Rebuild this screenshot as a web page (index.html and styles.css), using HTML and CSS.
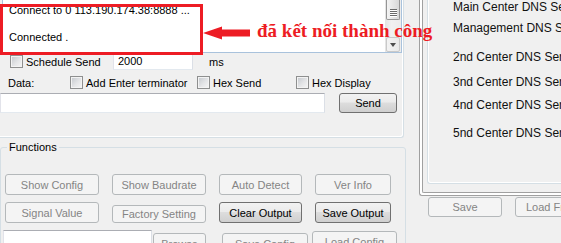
FILE: index.html
```html
<!DOCTYPE html>
<html lang="vi">
<head>
<meta charset="utf-8">
<title>Connection</title>
<link rel="stylesheet" href="styles.css">
</head>
<body>
<div class="app">
  <div class="left">
    <div class="upper">
      <div class="output">
        <div class="output-text">
          <div>Connect to 0 113.190.174.38:8888 ...</div>
          <div>&nbsp;</div>
          <div>Connected .</div>
        </div>
        <div class="scrollbar">
          <div class="thumb"><span class="grip"></span><span class="grip"></span><span class="grip"></span><span class="grip"></span></div>
          <div class="sb-down"><span class="tri"></span></div>
        </div>
      </div>
      <div class="row schedule">
        <span class="cb"></span><span class="lbl lbl-sched">Schedule Send</span>
        <span class="textbox tb-interval">2000</span>
        <span class="lbl ms">ms</span>
      </div>
      <div class="row data">
        <span class="lbl lbl-data">Data:</span>
        <span class="cb"></span><span class="lbl lbl-enter">Add Enter terminator</span>
        <span class="cb"></span><span class="lbl lbl-hexsend">Hex Send</span>
        <span class="cb"></span><span class="lbl lbl-hexdisp">Hex Display</span>
      </div>
      <div class="row send-row">
        <span class="textbox tb-data"></span>
        <button class="btn btn-send">Send</button>
      </div>
    </div>
    <fieldset class="functions">
      <legend>Functions</legend>
      <div class="grid">
        <button class="btn off">Show Config</button>
        <button class="btn off">Show Baudrate</button>
        <button class="btn off">Auto Detect</button>
        <button class="btn off">Ver Info</button>
        <button class="btn off">Signal Value</button>
        <button class="btn off factory">Factory Setting</button>
        <button class="btn">Clear Output</button>
        <button class="btn save-out">Save Output</button>
      </div>
      <div class="row files">
        <span class="textbox tb-path"></span>
        <button class="btn off btn-browse">Browse</button>
        <button class="btn off btn-savecfg">Save Config</button>
        <button class="btn off btn-loadcfg">Load Config</button>
      </div>
    </fieldset>
  </div>
  <div class="right">
    <div class="frame">
      <div class="frame-inner">
        <div class="dns-box">
          <div>Main Center DNS Server</div>
          <div>Management DNS Server</div>
          <div>2nd Center DNS Server</div>
          <div>3nd Center DNS Server</div>
          <div>4nd Center DNS Server</div>
          <div>5nd Center DNS Server</div>
        </div>
      </div>
    </div>
    <div class="right-btns">
      <button class="btn off btn-save">Save</button>
      <button class="btn off btn-loadfr">Load From File</button>
    </div>
  </div>
</div>
<div class="red-box"></div>
<svg class="arrow" width="48" height="14" viewBox="0 0 48 14">
  <polygon points="0,7 19,0.5 19,3.5 47,3.5 47,10.5 19,10.5 19,13.5" fill="#ed1c24"/>
</svg>
<div class="note">đã kết nối thành công</div>
</body>
</html>
```
FILE: styles.css
```css
* { box-sizing: border-box; }
html, body { margin: 0; }
body {
  width: 561px;
  height: 243px;
  overflow: hidden;
  position: relative;
  background: #f0f0f0;
  font-family: "Liberation Sans", Arial, sans-serif;
  font-size: 11px;
  color: #000;
}

.btn {
  font-family: inherit;
  font-size: 11px;
  height: 21px;
  padding: 0;
  margin: 0;
  border: 1px solid #707070;
  border-radius: 3px;
  background: linear-gradient(#f2f2f2 0%, #ebebeb 45%, #dddddd 50%, #cfcfcf 100%);
  color: #000;
  text-align: center;
  white-space: nowrap;
  overflow: hidden;
  flex: none;
}
.btn.off {
  border-color: #b4b8ba;
  background: #f4f4f4;
  color: #848484;
}

.app { display: flex; height: 243px; }
.left { width: 410px; flex: none; }

.upper {
  width: 404px;
  height: 138px;
  border-right: 1px solid #d5dfe5;
  border-bottom: 1px solid #d5dfe5;
  border-bottom-right-radius: 3px;
  box-shadow: inset -1px -1px 0 #fff;
}
.output {
  margin-left: 2px;
  width: 400px;
  height: 53px;
  background: #fff;
  border: 1px solid #a9c2dc;
  border-top: 0;
  display: flex;
}
.output-text {
  flex: 1;
  padding: 4px 0 0 6px;
  line-height: 13.5px;
  white-space: nowrap;
  overflow: hidden;
}
.scrollbar {
  width: 16px;
  flex: none;
  display: flex;
  flex-direction: column;
  justify-content: space-between;
  background: linear-gradient(90deg, #e3e3e3, #f1f1f1 40%, #ececec);
}
.thumb {
  height: 20px;
  margin: 0 1px;
  border: 1px solid #959595;
  border-top: 0;
  border-radius: 0 0 2px 2px;
  background: linear-gradient(90deg, #f4f4f4, #e6e6e6 50%, #d8d8d8);
  display: flex;
  flex-direction: column;
  align-items: center;
  justify-content: center;
  gap: 1px;
  padding-top: 6px;
}
.grip {
  width: 7px;
  height: 1px;
  background: #6a6a6a;
  box-shadow: 0 1px 0 #fff;
}
.sb-down {
  height: 15px;
  margin: 0 1px;
  border: 1px solid #c9c9c9;
  border-radius: 2px;
  background: linear-gradient(90deg, #f3f3f3, #e9e9e9);
  display: flex;
  align-items: center;
  justify-content: center;
}
.tri {
  width: 0;
  height: 0;
  border-left: 3.5px solid transparent;
  border-right: 3.5px solid transparent;
  border-top: 4px solid #4d4d4d;
}

.row { display: flex; align-items: center; }
.lbl { white-space: nowrap; }
.cb {
  width: 13px;
  height: 13px;
  flex: none;
  border: 1px solid #8e8f8f;
  background: linear-gradient(135deg, #c3c7cc 0%, #e4e5e7 55%, #f6f6f6 100%);
  box-shadow: inset 0 0 0 1px #f3f3f3;
}
.textbox {
  display: block;
  flex: none;
  background: #fff;
  border: 1px solid;
  border-color: #abadb3 #dbdfe6 #e3e9ef #e2e3ea;
}

.schedule { height: 17px; }
.schedule .cb { margin-left: 10px; }
.lbl-sched { margin-left: 3px; width: 87px; }
.tb-interval { width: 80px; height: 17px; padding-left: 4px; line-height: 15px; }
.ms { margin-left: 16px; }

.data { height: 13px; margin-top: 6px; }
.lbl-data { margin-left: 8px; width: 62px; }
.lbl-enter { margin-left: 3px; width: 111px; }
.lbl-hexsend { margin-left: 3px; width: 83px; }
.lbl-hexdisp { margin-left: 3px; }

.send-row { margin-top: 4px; height: 20px; }
.tb-data { width: 325px; height: 20px; }
.btn-send { margin-left: 14px; width: 58px; height: 20px; }

.functions {
  margin: 3px 0 0 0;
  padding: 20px 0 0 4px;
  width: 406px;
  height: 130px;
  min-width: 0;
  border: 1px solid #d5dfe5;
  border-radius: 3px;
}
.functions legend {
  padding: 0 2px;
  margin-left: 2px;
  line-height: 13px;
  font-size: 11px;
}
.grid {
  display: grid;
  grid-template-columns: 94px 94px 83px 76px;
  column-gap: 13px;
  row-gap: 7px;
  grid-auto-rows: 21px;
}
.grid .factory { height: 18px; align-self: end; }
.files { margin-top: 7px; margin-left: -2px; align-items: flex-start; }
.tb-path { width: 149px; height: 20px; }
.btn-browse { margin: 3px 0 0 1px; width: 53px; }
.btn-savecfg { margin: 3px 0 0 16px; width: 86px; }
.btn-loadcfg { margin: 1px 0 0 4px; width: 85px; }

.right { flex: 1; padding-left: 9px; overflow: hidden; }
.frame {
  width: 160px;
  height: 196px;
  background: #fff;
  border-left: 1px solid #a0a0a0;
  border-bottom: 1px solid #a0a0a0;
  border-bottom-left-radius: 3px;
  padding: 0 0 2px 2px;
}
.frame-inner {
  height: 100%;
  background: #f0f0f0;
  border-left: 1px solid #a0a0a0;
  border-bottom: 1px solid #a0a0a0;
  border-bottom-left-radius: 2px;
  padding-left: 4px;
}
.dns-box {
  height: 184px;
  border-left: 1px solid #d5dfe5;
  border-bottom: 1px solid #d5dfe5;
  border-bottom-left-radius: 3px;
  box-shadow: inset 1px -1px 0 #fff;
  padding-left: 25px;
  font-size: 12px;
  line-height: 14px;
  color: #111;
  white-space: nowrap;
}
.dns-box div:nth-child(2) { margin-top: 7px; }
.dns-box div:nth-child(3) { margin-top: 15px; }
.dns-box div:nth-child(4) { margin-top: 11px; }
.dns-box div:nth-child(5) { margin-top: 9px; }
.dns-box div:nth-child(6) { margin-top: 14px; }

.right-btns { display: flex; margin-top: 1px; padding-left: 9px; }
.btn-save { width: 74px; height: 20px; }
.btn-loadfr { width: 96px; height: 20px; margin-left: 13px; }

.red-box {
  position: absolute;
  left: 0;
  top: 4px;
  width: 203px;
  height: 51px;
  border: 3px solid #ed1c24;
}
.arrow { position: absolute; left: 203px; top: 26px; }
.note {
  position: absolute;
  left: 257px;
  top: 20px;
  font-family: "Liberation Serif", "Times New Roman", serif;
  font-weight: bold;
  font-size: 19px;
  line-height: 21px;
  color: #ed1c24;
  white-space: nowrap;
}
```
